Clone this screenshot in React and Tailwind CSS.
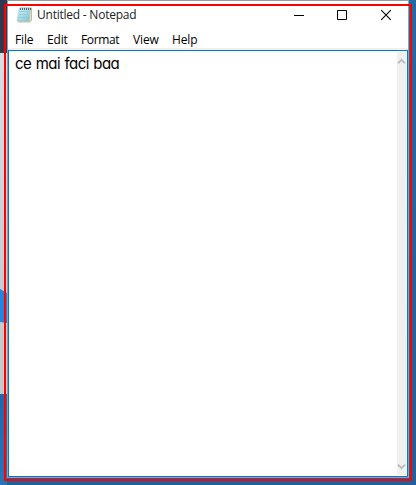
function NotepadIcon() {
  return (
    <svg width="16" height="17" viewBox="0 0 16 17" className="block shrink-0">
      <defs>
        <linearGradient id="paper" x1="0" y1="0" x2="1" y2="1">
          <stop offset="0" stopColor="#d3f0f4" />
          <stop offset="0.5" stopColor="#aadde7" />
          <stop offset="1" stopColor="#7cc2d4" />
        </linearGradient>
      </defs>
      <path d="M4 2H15.5V14.3L13.8 16H2.5Z" fill="#e4dcc4" stroke="#a39878" strokeWidth="0.6" />
      <path d="M3.2 2H14.3L13.2 15H1Z" fill="url(#paper)" stroke="#8dbbc5" strokeWidth="0.4" />
      <path d="M3 5.5H13.6M2.6 8.5H13.3M2.2 11.5H13" stroke="#83c0ce" strokeWidth="0.5" />
      <path d="M4.5 2V4M6.5 2V4M8.5 2V4M10.5 2V4M12.5 2V4M14.5 2V4" stroke="#49565b" strokeWidth="0.9" />
    </svg>
  );
}

function Menu({ label, box }) {
  return <span className={`${box} whitespace-nowrap`}>{label}</span>;
}

function Chevron({ down }) {
  return (
    <svg width="9" height="7" viewBox="0 0 9 7" className={down ? "block rotate-180" : "block"}>
      <path d="M1 5.4L4.5 1.9L8 5.4" fill="none" stroke="#bdbdbd" strokeWidth="2" />
    </svg>
  );
}

export default function App() {
  return (
    <div className="relative flex h-[485px] w-[416px] overflow-hidden bg-gradient-to-b from-[#2369a4] to-[#235f98] font-['Open_Sans','Noto_Sans',sans-serif] text-black">
      <div className="flex h-[485px] w-[7px] shrink-0 flex-col">
        <div className="h-[53px] bg-[#2d3a50]" />
        <div className="h-[235px] bg-gradient-to-b from-[#d5dfe4] to-[#c4cdd3]" />
        <div className="h-[35px] bg-[#c4cad0]">
          <svg width="7" height="35" className="block">
            <path d="M0 1L7 5V35L0 34Z" fill="#1f87df" />
          </svg>
        </div>
        <div className="h-[71px] bg-[#c5cacf]" />
        <div className="h-[91px] bg-gradient-to-b from-[#1b69ae] to-[#2876b8]" />
      </div>
      <div className="flex h-[478px] w-[402px] shrink-0 flex-col border border-[#999ca0] bg-white">
        <div className="flex h-[29px] shrink-0 items-start pl-2 pt-[5px]">
          <NotepadIcon />
          <span className="ml-[5px] mt-px w-[99px] whitespace-nowrap text-[12px] leading-[16px] tracking-[-0.23px] text-[#222]">Untitled - Notepad</span>
          <svg width="110" height="12" viewBox="0 0 110 12" className="ml-[158px] mt-[3px] block shrink-0" fill="none" stroke="black">
            <path d="M0 6.5H10" />
            <path d="M43.5 1.5H52.5V10.5H43.5Z" />
            <path d="M87.2 1.2L96.8 10.8M96.8 1.2L87.2 10.8" strokeWidth="1.1" />
          </svg>
        </div>
        <div className="flex h-[20px] shrink-0 items-start border-b-2 border-[#f0f0f0] pl-[7px] pt-[2px] text-[12px] leading-[16px] tracking-[-0.15px]">
          <Menu label="File" box="w-8" />
          <Menu label="Edit" box="w-[34px]" />
          <Menu label="Format" box="w-[52px] tracking-[-0.35px]" />
          <Menu label="View" box="w-[39px]" />
          <Menu label="Help" box="w-8" />
        </div>
        <div className="flex min-h-0 flex-1 justify-between border border-[#0078d7] pb-px pt-px">
          <div className="pl-[6px] pt-[2px] font-['Inter',sans-serif] text-[15px] leading-[20px] tracking-[-0.5px] [font-feature-settings:'cv11'] [word-spacing:0.6px]">ce mai faci baa</div>
          <div className="mr-px flex w-[9px] flex-col items-center justify-between bg-[#f0f0f0] pb-[5px] pt-[6px]">
            <Chevron />
            <Chevron down />
          </div>
        </div>
      </div>
      <div className="absolute left-[4px] top-[4px] h-[477px] w-[408px] border-2 border-[#ff0000]" />
    </div>
  );
}
